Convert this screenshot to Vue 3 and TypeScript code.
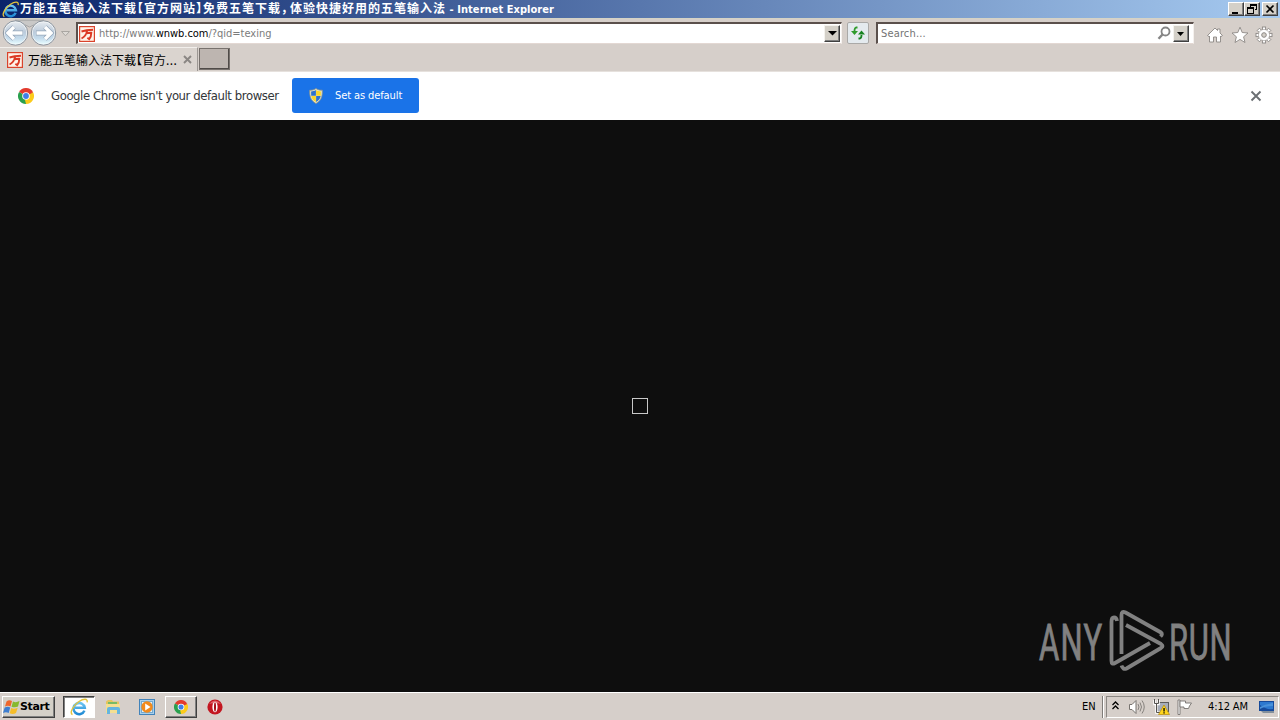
<script setup lang="ts">
const address = { scheme: 'http://www.', host: 'wnwb.com', path: '/?qid=texing' }
const teeth: number[] = [0, 45, 90, 135, 180, 225, 270, 315]
</script>

<template>
  <div class="screen">
    <svg class="defs" width="0" height="0" aria-hidden="true">
      <defs>
        <linearGradient id="orb" x1="0" y1="0" x2="0" y2="1">
          <stop offset="0" stop-color="#e4e9ee" />
          <stop offset=".45" stop-color="#bccbdb" />
          <stop offset=".75" stop-color="#c4dbec" />
          <stop offset="1" stop-color="#e6fafd" />
        </linearGradient>
        <linearGradient id="iegrad" x1="0" y1="0" x2="0" y2="1">
          <stop offset="0" stop-color="#6cc4f2" />
          <stop offset="1" stop-color="#1f8ad4" />
        </linearGradient>
        <symbol id="ie" viewBox="0 0 16 16">
          <path d="M12.800 11.200A5 5 0 1 1 13.100 8.700H4.500" fill="none" stroke="url(#iegrad)" stroke-width="2.300" />
          <path d="M2.200 14.800C-.8 13 3 6.500 8 3.100C12 .5 16 .2 15.200 3.800" fill="none" stroke="#e3c43c" stroke-width="1.200" />
        </symbol>
        <symbol id="chrome" viewBox="0 0 16 16">
          <path d="M8 8L1.070 4A8 8 0 0 1 14.930 4Z" fill="#e33b2e" />
          <path d="M8 8L14.930 4A8 8 0 0 1 8 16Z" fill="#fccb1b" />
          <path d="M8 8L8 16A8 8 0 0 1 1.070 4Z" fill="#2aa04e" />
          <path d="M8 4.300H14.950L15.100 4.500L8 8Z" fill="#e33b2e" />
          <path d="M11.300 9.700L8 16L7 12Z" fill="#fccb1b" />
          <circle cx="8" cy="8" r="3.800" fill="#fff" />
          <circle cx="8" cy="8" r="2.900" fill="#3f7fe8" />
        </symbol>
        <symbol id="wan" viewBox="0 0 16 16">
          <rect x=".6" y=".6" width="14.800" height="14.800" fill="#fff3e8" stroke="#d9432c" stroke-width="1.200" />
          <path d="M2.500 5.500Q7 4 14 3.800M8.300 4.600C7.500 8 5.500 11 2.500 12.500M6.500 7.600Q9.500 6.600 12.300 6.800Q12.300 10.500 10.200 13.200L8.400 11.800" fill="none" stroke="#dc3a25" stroke-width="1.900" />
        </symbol>
      </defs>
    </svg>

    <header class="titlebar">
      <svg class="title-ie" width="17" height="17"><use href="#ie" /></svg>
      <h1 class="title">万能五笔输入法下载<span class="half">【</span>官方网站<span class="half">】</span>免费五笔下载<span class="half comma">，</span>体验快捷好用的五笔输入法<span class="latin"> - Internet Explorer</span></h1>
      <div class="winbtns">
        <button class="wb"><svg width="14" height="12"><path d="M3 9h6v2h-6z" /></svg></button>
        <button class="wb"><svg width="14" height="12"><path d="M5 1h7v6h-2v-1h1v-3h-5v1h-1zM2 4h7v7h-7zM3 6v4h5v-4z" fill-rule="evenodd" /></svg></button>
        <button class="wb last"><svg width="14" height="12"><path d="M3.500 2.500L10.500 9.500M10.500 2.500L3.500 9.500" stroke="#000" stroke-width="1.700" /></svg></button>
      </div>
    </header>

    <nav class="navbar">
      <svg class="orbs" width="72" height="28" viewBox="0 0 72 28">
        <path d="M15 2.200H44L29.500 9Z" fill="#c9c8c7" stroke="#a5a5a6" />
        <circle cx="15.500" cy="15" r="12.200" fill="#f4f7f9" stroke="#8a939d" stroke-width="1" />
        <circle cx="43.500" cy="15" r="12.200" fill="#f4f7f9" stroke="#8a939d" stroke-width="1" />
        <circle cx="15.500" cy="15" r="10.800" fill="url(#orb)" />
        <circle cx="43.500" cy="15" r="10.800" fill="url(#orb)" />
        <path d="M7.500 15H23M14 9L8 15L14 21" fill="none" stroke="#93a5b9" stroke-width="4.800" />
        <path d="M8 15H22.500M14 9L8 15L14 21" fill="none" stroke="#fff" stroke-width="3.400" />
        <path d="M36 15H51.500M45 9L51 15L45 21" fill="none" stroke="#93a5b9" stroke-width="4.800" />
        <path d="M36.500 15H51M45 9L51 15L45 21" fill="none" stroke="#fff" stroke-width="3.400" />
        <path d="M61.500 13.500H69.500L65.500 17.800Z" fill="#dedad6" stroke="#aaa6a2" />
      </svg>
      <div class="field url">
        <svg width="16" height="16"><use href="#wan" /></svg>
        <span class="urltext">{{ address.scheme }}<b>{{ address.host }}</b>{{ address.path }}</span>
        <button class="drop"><svg width="9" height="5"><path d="M0 0H9L4.500 4.500Z" /></svg></button>
      </div>
      <button class="refresh">
        <svg width="16" height="16" viewBox="0 0 16 16">
          <path d="M7.500 2.500H6Q4.500 3 4.500 6" fill="none" stroke="#2e9b2b" stroke-width="1.800" />
          <path d="M1 6H8L4.500 10Z" fill="#2e9b2b" />
          <path d="M8.500 13.500H10Q11.500 13 11.500 10" fill="none" stroke="#188321" stroke-width="1.800" />
          <path d="M8 9.500H15L11.500 5.500Z" fill="#188321" />
        </svg>
      </button>
      <div class="field search">
        <span class="placeholder">Search...</span>
        <svg class="mag" width="15" height="15"><circle cx="8.500" cy="5.500" r="4" fill="none" stroke="#858585" stroke-width="1.800" /><path d="M5.500 8.500L1.500 12.800" stroke="#858585" stroke-width="2.400" /></svg>
        <button class="drop"><svg width="8" height="4"><path d="M0 0H7L3.500 4Z" /></svg></button>
      </div>
      <div class="tools">
        <svg width="18" height="18" viewBox="0 0 18 18"><path d="M1.500 9.500L9 2L11.500 4.500V3H14V7L16.500 9.500L15 10.500L14.500 10V16H10.500V11H7.500V16H3.500V10L3 10.500Z" fill="#fff" stroke="#8c8885" stroke-width=".9" /></svg>
        <svg width="18" height="18" viewBox="0 0 18 18"><path d="M9 1.200L11.200 6.500L17 7L12.600 10.800L14 16.500L9 13.400L4 16.500L5.400 10.800L1 7L6.800 6.500Z" fill="#fff" stroke="#8c8885" stroke-width=".9" /></svg>
        <svg width="18" height="18" viewBox="0 0 18 18">
          <rect v-for="a in teeth" :key="a" x="7.400" y="1" width="3.200" height="4" fill="#fff" stroke="#8c8885" stroke-width=".9" :transform="`rotate(${a} 9 9)`" />
          <circle cx="9" cy="9" r="5.600" fill="#fff" stroke="#8c8885" stroke-width=".5" />
          <circle cx="9" cy="9" r="2.300" fill="#d4d0c8" stroke="#8c8885" />
        </svg>
      </div>
    </nav>

    <div class="tabs">
      <div class="tab">
        <svg width="16" height="16"><use href="#wan" /></svg>
        <span class="tabtext">万能五笔输入法下载<span class="half">【</span>官方<span class="dots">...</span></span>
        <svg class="tabx" width="9" height="9"><path d="M1 1L8 8M8 1L1 8" stroke="#8a8683" stroke-width="1.900" /></svg>
      </div>
      <button class="newtab"></button>
    </div>

    <section class="infobar">
      <svg class="chromeicon" width="16" height="16"><use href="#chrome" /></svg>
      <span class="notice">Google Chrome isn't your default browser</span>
      <button class="default">
        <svg width="14" height="16" viewBox="0 0 14 16">
          <path d="M7 .5C5 2 3 2.200 .7 2.200C.5 8 1.500 12.500 7 15.500C12.500 12.500 13.500 8 13.300 2.200C11 2.200 9 2 7 .5Z" fill="#e8e4c8" stroke="#8e9488" stroke-width=".8" />
          <path d="M6.900 2C5.500 3 4 3.300 2.100 3.400L2.200 7.800H6.900Z" fill="#2d72cf" />
          <path d="M7.100 2C8.500 3 10 3.300 11.900 3.400L11.800 7.800H7.100Z" fill="#fad62b" />
          <path d="M6.900 8V14C4.200 12.500 2.700 10.700 2.300 8Z" fill="#fad62b" />
          <path d="M7.100 8V14C9.800 12.500 11.300 10.700 11.700 8Z" fill="#2d72cf" />
        </svg>
        <span>Set as default</span>
      </button>
      <svg class="close" width="12" height="12"><path d="M1.500 1.500L10.500 10.500M10.500 1.500L1.500 10.500" stroke="#6b6f73" stroke-width="1.900" /></svg>
    </section>

    <main class="page">
      <i class="placeholderbox"></i>
      <svg class="mark" width="200" height="70" viewBox="0 0 200 70">
        <g fill="#818181" stroke="#818181" stroke-width=".9" class="marktext">
          <text transform="translate(4 51.500) scale(.62 1)" textLength="102" lengthAdjust="spacing">ANY</text>
          <text transform="translate(134 51.500) scale(.62 1)" textLength="101" lengthAdjust="spacing">RUN</text>
        </g>
        <g fill="none" stroke="#818181" stroke-width="3.800" stroke-linejoin="round">
          <path d="M82 13Q81.500 9.500 79 9.500Q76.500 9.500 76.500 14V53Q76.500 57 80 55L115 35" />
          <path d="M86.500 46V7Q86.500 2.500 90.500 4.500L126 24.500Q128 26 125.500 28.500" />
          <path d="M91 17L126 36Q129 38 126 40L91.500 60.500Q88 62 86.500 57.500" />
        </g>
      </svg>
    </main>

    <footer class="taskbar">
      <button class="start">
        <svg width="18" height="17" viewBox="0 0 18 17">
          <path d="M3.500 2.500Q6 .5 9 2L7.500 7.500Q5 6 2 7.500Z" fill="#ee672d" />
          <path d="M10 2.500Q13 4 16.500 2L15 7.500Q12 9 8.500 7.700Z" fill="#87b92e" />
          <path d="M1.700 8.500Q5 7 7.200 8.500L5.700 14Q3 12.500 0 14Z" fill="#3e7ed0" />
          <path d="M8.200 9Q11 10.500 14.700 8.700L13 14Q10 15.800 6.700 14.300Z" fill="#f5bd29" />
        </svg>
        <span>Start</span>
      </button>
      <div class="task active"><svg width="18" height="18"><use href="#ie" /></svg></div>
      <div class="task">
        <svg width="18" height="18" viewBox="0 0 18 18">
          <path d="M2 3.500L4 2H8L9 3.500H15V15H2Z" fill="#e5c55f" />
          <path d="M4 4H13V7H4Z" fill="#78bb65" />
          <path d="M2 6H16V15H2Z" fill="#f4df91" />
          <path d="M3 16V11Q3 9 5 9H14Q16 9 16 11V16H13V12H6V16Z" fill="#65b5df" />
        </svg>
      </div>
      <div class="task">
        <svg width="18" height="18" viewBox="0 0 18 18">
          <rect x="1.500" y="1.500" width="15" height="15" fill="#a9d0ec" stroke="#4283ba" />
          <rect x="3.500" y="3.500" width="11" height="11" fill="#e6f1f7" stroke="#75aacf" />
          <circle cx="9" cy="9" r="5.700" fill="#f28a1c" />
          <path d="M7.200 5.500L12.500 9L7.200 12.500Z" fill="#fff" />
        </svg>
      </div>
      <div class="task raised"><svg width="14" height="14" viewBox="0 0 16 16"><use href="#chrome" width="16" height="16" /></svg></div>
      <div class="task">
        <svg width="16" height="16"><circle cx="8" cy="8" r="7.600" fill="#c31620" /><path d="M2 5Q8-2 14 5Q8 3 2 5Z" fill="#e0636a" /><ellipse cx="8" cy="8" rx="2.600" ry="5.300" fill="#fff" /><ellipse cx="8" cy="8" rx="1" ry="4.700" fill="#a40f18" /></svg>
      </div>
      <span class="lang">EN</span>
      <i class="sep"></i>
      <div class="tray">
        <svg class="chev" width="7" height="9"><path d="M.5 4L3.500 1L6.500 4M.5 8L3.500 5L6.500 8" fill="none" stroke="#000" stroke-width="1.300" /></svg>
        <svg class="vol" width="18" height="16" viewBox="0 0 18 16"><path d="M1.500 5.500H4L8 1.500V14.500L4 10.500H1.500Z" fill="#fff" stroke="#77736f" /><path d="M10 5Q12 8 10 11M12 3.500Q15 8 12 12.500M14 1.500Q18.500 8 14 14.500" fill="none" stroke="#85817d" /></svg>
        <svg class="net" width="17" height="16" viewBox="0 0 17 16">
          <rect x="4.500" y="3.500" width="11" height="9" fill="#a7adba" stroke="#5c5c5c" />
          <path d="M1.500 1V5H5.500V1M3.500 5V13.500H8" fill="none" stroke="#fff" stroke-width="2.500" />
          <path d="M1.500 0V4.500H5.500V0M3.500 5V13.500H8" fill="none" stroke="#55524f" />
          <path d="M11 6L16.500 15.500H5.500Z" fill="#ffd51d" stroke="#b58b0c" stroke-width=".7" /><path d="M10.400 9h1.300v3.500h-1.300zM10.400 13.300h1.300v1.200h-1.300z" />
        </svg>
        <svg class="flag" width="17" height="16" viewBox="0 0 17 16"><path d="M2 15.500V1H4V15.500Z" fill="#fff" stroke="#77736f" stroke-width=".9" /><path d="M4 2H9.500V4H15.500L13.500 7L12.500 9.500H8V8H4Z" fill="#fff" stroke="#77736f" stroke-width=".9" /></svg>
        <time>4:12 AM</time>
        <svg class="desk" width="15" height="14" viewBox="0 0 15 14"><path d="M0 1H15V11H0Z" fill="#164a9a" /><path d="M1 2H14V9Q7 10 1 5Z" fill="#2d79cf" /><path d="M1 7Q6 4 14 3V6Q6 6 1 9Z" fill="#4a92da" /><path d="M2 11H15V13H4Z" fill="#84909c" /></svg>
      </div>
    </footer>
  </div>
</template>

<style>
body { overflow: hidden; }
</style>

<style scoped>
.screen { width: 1280px; height: 720px; display: flex; flex-direction: column; background: #d4d0c8; overflow: hidden; font: 11px/14px "DejaVu Sans Condensed", "DejaVu Sans", "Noto Sans CJK SC", sans-serif; color: #000; position: relative; }
.defs { position: absolute; }
svg { display: block; flex: none; }
button { padding: 0; margin: 0; border: 0; font: inherit; box-sizing: border-box; }
.half { font-feature-settings: "halt"; }

.titlebar { height: 18px; flex: none; display: flex; align-items: center; background: linear-gradient(90deg, #0a246a, #a6caf0); color: #fff; }
.title-ie { margin-left: 2px; margin-right: 1px; }
.title { margin: 0; font: bold 12px/18px "Noto Sans CJK SC", sans-serif; letter-spacing: 1px; white-space: pre; }
.comma { margin-right: 2px; }
.latin { font: bold 11px/18px "DejaVu Sans Condensed", "DejaVu Sans", sans-serif; letter-spacing: .05px; }
.winbtns { margin-left: auto; display: flex; padding-right: 2px; }
.wb { width: 16px; height: 14px; background: #d4d0c8; border: 1px solid; border-color: #fff #404040 #404040 #fff; box-shadow: inset -1px -1px #808080; }
.wb.last { margin-left: 2px; }

.navbar { height: 29px; flex: none; display: flex; align-items: flex-start; background: #d6cfca; box-shadow: inset 0 1px #d5d3c5; }
.orbs { flex: none; }
.field { box-sizing: border-box; height: 22px; margin-top: 4px; display: flex; align-items: center; background: #fff; border: solid; border-width: 2px 1px 1px 2px; border-color: #5b504c #f5f1ee #e3d8d3 #5b504c; }
.url { width: 766px; margin-left: 4px; padding: 0 1px; }
.urltext { margin-left: 4px; color: #7b7b7b; letter-spacing: 0; white-space: pre; }
.urltext b { font-weight: normal; color: #000; letter-spacing: -.05px; }
.drop { width: 16px; height: 17px; background: #d4d0c8; border: 1px solid; border-color: #f4f2ee #404040 #404040 #f4f2ee; box-shadow: inset -1px -1px #808080; display: flex; align-items: center; justify-content: center; margin-left: auto; }
.refresh { width: 22px; height: 22px; margin: 4px 0 0 5px; background: #e4eaee; border: 1px solid #aaa9a7; border-radius: 2px; display: flex; align-items: center; justify-content: center; }
.search { width: 318px; margin-left: 7px; padding: 0 4px 0 3px; }
.placeholder { color: #737373; letter-spacing: .15px; }
.mag { margin-left: auto; }
.search .drop { margin-left: 1px; }
.tools { display: flex; margin: 8px 0 0 12px; gap: 6.500px; }

.tabs { height: 24px; flex: none; display: flex; background: #d6cfca; border-bottom: 1px solid #e6e1dd; }
.tab { width: 198px; display: flex; align-items: center; box-sizing: border-box; padding-left: 7px; background: #dad4cf; border-top: 1px solid #f2efec; border-right: 1px solid #9d9894; }
.tabtext { margin-left: 5px; font: 12px/18px "Noto Sans CJK SC", sans-serif; white-space: pre; }
.dots { letter-spacing: .4px; }
.tabx { margin-left: 6px; }
.newtab { width: 31px; height: 22px; margin: 1px 0 0 1px; background: #bdb5b0; border: solid; border-width: 1px 2px 2px 1px; border-color: #f2efed #504b48 #504b48 #f2efed; outline: 1px solid #77716d; outline-offset: -1px; }

.infobar { height: 48px; flex: none; display: flex; align-items: center; background: #fff; }
.chromeicon { margin-left: 18px; }
.notice { margin-left: 17px; width: 241px; font-size: 13px; letter-spacing: -.42px; color: #333639; white-space: nowrap; }
.default { width: 127px; height: 35px; border-radius: 3px; background: #1a73e8; color: #fff; display: flex; align-items: center; padding-left: 17px; gap: 12px; margin-bottom: 1px; }
.default span { white-space: nowrap; letter-spacing: -.1px; }
.close { margin-left: auto; margin-right: 18px; }

.page { flex: 1; background: #0e0e0e; position: relative; }
.placeholderbox { position: absolute; left: 632px; top: 278px; width: 14px; height: 14px; border: 1px solid #c8c8c8; }
.mark { position: absolute; left: 1035px; top: 488px; }
.marktext { font: 50px "Roboto", sans-serif; }

.taskbar { height: 28px; flex: none; box-sizing: border-box; border-top: 1px solid #fff; background: #d6cfca; display: flex; align-items: center; padding-top: 1px; }
.start { width: 53px; height: 22px; margin: 0 8px 0 2px; display: flex; align-items: center; padding-left: 0; background: #d4d0c8; border: 1px solid; border-color: #fff #404040 #404040 #fff; box-shadow: inset -1px -1px #808080; font: bold 11px/14px "DejaVu Sans", sans-serif; }
.start span { letter-spacing: -.4px; margin-left: -1px; }
.task { width: 32px; height: 22px; margin-right: 2px; box-sizing: border-box; display: flex; align-items: center; justify-content: center; }
.active { background: #fff; border: 1px solid; border-color: #404040 #fff #fff #404040; box-shadow: inset 1px 1px #808080; }
.raised { border: 1px solid; border-color: #fff #404040 #404040 #fff; box-shadow: inset -1px -1px #808080; }
.lang { margin-left: auto; width: 20px; }
.sep { width: 1px; height: 22px; background: #807c78; border-right: 1px solid #fff; margin-right: 2px; }
.tray { width: 173px; height: 22px; box-sizing: border-box; margin-right: 1px; display: flex; align-items: center; border: 1px solid; border-color: #8b8783 #fff #fff #8b8783; }
.chev { margin: 0 0 3px 5px; }
.vol { margin-left: 9px; }
.net { margin-left: 7px; }
.flag { margin-left: 6px; }
time { width: 51px; margin-left: 15px; white-space: nowrap; letter-spacing: -.1px; }
</style>
